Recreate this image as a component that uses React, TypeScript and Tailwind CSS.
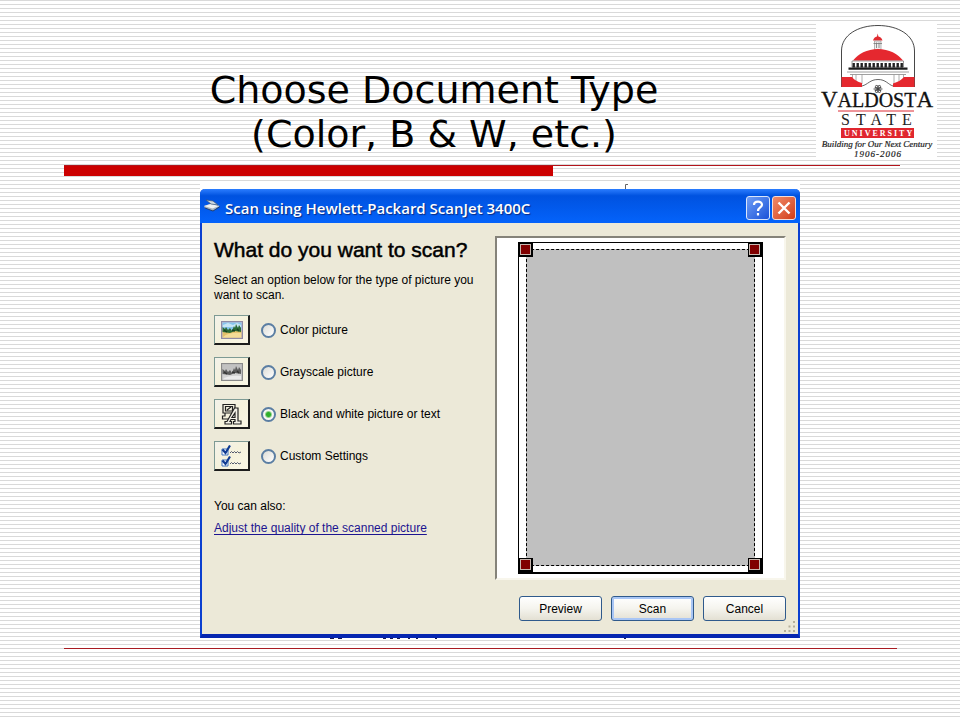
import React, { useState } from 'react';

interface ScanOption {
  id: string;
  label: string;
  icon: React.ReactNode;
}

const ColorIcon = () => (
  <svg className="w-[22px] h-[18px]" viewBox="0 0 22 18">
    <rect x="0.5" y="0.5" width="21" height="17" fill="#b9b4c8" stroke="#8f8ba5" />
    <rect x="1.5" y="1.5" width="19" height="8" fill="#86c5ee" />
    <path d="M2 4 L7 2 L12 4 L16 2 L20 4 V6 H2 Z" fill="#c7e6f5" />
    <rect x="1.5" y="9.5" width="19" height="7" fill="#e3c069" />
    <path d="M2 16 Q8 11 20 12 V16.5 H2 Z" fill="#f4dc96" />
    <path d="M1.5 6 L4 8 L5 6 L7 9 L9 7 L11 10 L13 5 L14 7 L15 3 L17 7 L18 4 L20 7 V11 L14 10 L9 12 L1.5 11 Z" fill="#2c6b35" />
    <path d="M3 9 L6 11 M11 9 L14 10 M16 8 L18 10" stroke="#163f22" strokeWidth="1.4" />
  </svg>
);

const GrayscaleIcon = () => (
  <svg className="w-[22px] h-[18px]" viewBox="0 0 22 18">
    <rect x="0.5" y="0.5" width="21" height="17" fill="#b5b5b5" stroke="#8a8a8a" />
    <rect x="1.5" y="1.5" width="19" height="8" fill="#c2c2c2" />
    <rect x="1.5" y="9.5" width="19" height="7" fill="#d2d2d2" />
    <path d="M2 16 Q8 12 20 13 V16.5 H2 Z" fill="#ececec" />
    <path d="M1.5 6 L4 8 L5 6 L7 9 L9 7 L11 10 L13 5 L14 7 L15 3 L17 7 L18 4 L20 7 V11 L14 10 L9 12 L1.5 11 Z" fill="#5c5c5c" />
    <path d="M3 9 L6 11 M11 9 L14 10 M16 8 L18 10" stroke="#333" strokeWidth="1.4" />
  </svg>
);

const BlackWhiteIcon = () => (
  <svg className="w-[22px] h-[22px]" viewBox="0 0 22 22" fill="none" stroke="#222" strokeWidth="1.2">
    <path d="M2 1.5 H14 V10 H2 Z" />
    <path d="M4.5 3.5 H11.5 V8 H4.5 Z M6 7 L10 4" />
    <path d="M4 10 V13 H1.5 V16 H8" />
    <path d="M13.5 5 H17 V18 H20 V21 H12.5 V18.5 H14 V16.5 H10 L9 18.5 H10.5 V21 H4 V18.5 H6 Z" fill="#f4f2e8" />
    <path d="M11 14.5 H14 V10 Z" />
  </svg>
);

const CustomIcon = () => (
  <svg className="w-[22px] h-[22px]" viewBox="0 0 22 22" fill="none">
    {[0, 11].map(y => (
      <g key={y} transform={`translate(0 ${y})`}>
        <path d="M1 4 H7 V10 H1 Z" fill="#fff" stroke="#3f74c0" />
        <path d="M1.5 4.5 L4.5 8 L9 0.5" stroke="#103c92" strokeWidth="2.2" />
        <path d="M9 8 L10.5 6.5 L12 8 L13.5 6.5 L15 8 L16.5 6.5 L18 8 L20 7" stroke="#555b70" />
      </g>
    ))}
  </svg>
);

const options: ScanOption[] = [
  { id: 'color', label: 'Color picture', icon: <ColorIcon /> },
  { id: 'grayscale', label: 'Grayscale picture', icon: <GrayscaleIcon /> },
  { id: 'bw', label: 'Black and white picture or text', icon: <BlackWhiteIcon /> },
  { id: 'custom', label: 'Custom Settings', icon: <CustomIcon /> },
];

const columns = [36, 40, 44, 48, 52, 56, 60, 64, 68, 72, 76, 80, 84];

const UniversityLogo = () => (
  <svg
    className="w-[121px] h-[136px] shrink-0 bg-white font-['Liberation_Serif',serif]"
    viewBox="0 0 121 136"
    role="img"
    aria-label="Valdosta State University"
  >
    <path d="M25.5 64 V28 C25.5 12 42 2.5 62 2.5 S98.5 12 98.5 28 V64" fill="none" stroke="#333" strokeWidth="0.9" />
    {/* Tower */}
    <path d="M57 17.5 Q58 14 61 13.5 L61.7 10.5 L62.4 13.5 Q65.5 14 66.5 17.5 Z" fill="#e02a30" />
    <path d="M58.5 18 H65 V27 H58.5 Z" fill="#eee" stroke="#888" strokeWidth="0.6" />
    <path d="M60.5 19.5 V25 M63 19.5 V25 M57.5 20.5 H66" stroke="#777" strokeWidth="0.8" />
    {/* Dome */}
    <path d="M37 37.5 C42 31 51 26 62 26 S82 31 87 37.5 Z" fill="#e5282f" />
    <path d="M36 38 H87.5 V44 H36 Z" fill="#fff" stroke="#555" strokeWidth="0.6" />
    {columns.map(x => (
      <rect key={x} x={x + 0.5} y="40" width="2.4" height="4.5" fill="#222" />
    ))}
    <path d="M32.5 44.5 H91.5 V46.8 H32.5 Z" fill="#1b1b1b" />
    <path d="M31 49 H93 M34 51.5 H90" stroke="#888" strokeWidth="0.8" />
    <path d="M36.5 51 V57 M40 51 V59 M46 51 V61 M78 51 V61 M83 51 V59 M87.5 51 V57" stroke="#999" strokeWidth="0.8" />
    <path d="M25.5 54 H36 Q39 58 46 60 V64 H25.5 Z" fill="#e5282f" />
    <path d="M98.5 54 H88 Q84 58.5 77 60.5 V64 H98.5 Z" fill="#e5282f" />
    <path d="M46 63 C52 61.5 54 56.5 62 56.5 S72 61.5 77 63" fill="none" stroke="#555" strokeWidth="0.9" />
    <g fill="none" stroke="#444" strokeWidth="0.7">
      <circle cx="62" cy="66" r="1.2" fill="#444" />
      <ellipse cx="62" cy="66" rx="4.2" ry="1.8" />
      <ellipse cx="62" cy="66" rx="4.2" ry="1.8" transform="rotate(60 62 66)" />
      <ellipse cx="62" cy="66" rx="4.2" ry="1.8" transform="rotate(120 62 66)" />
    </g>
    <text x="61" y="84" textAnchor="middle" fontSize="20" fill="#111" stroke="#111" strokeWidth="0.3">
      <tspan fontSize="23">V</tspan>ALDOST<tspan fontSize="23">A</tspan>
    </text>
    <path d="M22 88 H98" stroke="#dc2a35" />
    <text x="25" y="102" fontSize="16" fill="#222" className="tracking-[6px]">STATE</text>
    <rect x="25" y="105" width="73" height="10" fill="#e0262e" />
    <text x="28" y="113" fontSize="8" fill="#fff" fontWeight="bold" className="tracking-[2px]">UNIVERSITY</text>
    <text x="61" y="124" textAnchor="middle" fontSize="9" fontStyle="italic" fill="#222" stroke="#222" strokeWidth="0.2">Building for Our Next Century</text>
    <text x="38" y="134" fontSize="9" fontStyle="italic" fill="#222" stroke="#222" strokeWidth="0.2" className="tracking-[1px]">1906-2006</text>
  </svg>
);

const ScannerIcon = () => (
  <svg className="w-[18px] h-[14px]" viewBox="0 0 18 14">
    <path d="M1 7 L8 4.5 L17 7 L10 12 L2 9 Z" fill="#a8b4bf" />
    <path d="M1 7 L8 5 L16 7 L9.5 9.5 Z" fill="#eef2f4" />
    <path d="M3 1 L10 2 L15 6 L8 5 Z" fill="#cfd8de" stroke="#3c5878" strokeWidth="0.7" />
    <path d="M2 9 L10 12 L17 7.5" fill="none" stroke="#223f70" />
  </svg>
);

const Handle = ({ className }: { className: string }) => (
  <span className={`absolute size-[14px] border border-r-2 border-b-2 border-black bg-[#800000] inset-ring inset-ring-[#c8b8b0] ${className}`} />
);

const xpButton =
  'h-[25px] w-[83px] rounded-[3px] border border-[#2f5a8c] bg-linear-to-b from-white via-[#f5f4ee] to-[#e3e0d3] text-xs text-black';

export default function App() {
  const [selected, setSelected] = useState('bw');

  return (
    <main className="min-h-screen bg-white bg-[repeating-linear-gradient(to_bottom,#d9d9d9_0px,#d9d9d9_1px,transparent_1px,transparent_4px)] font-['Liberation_Sans',sans-serif] text-black">
      <header className="flex items-start pt-[23px] pr-[23px]">
        <h1 className="flex-1 pt-[45px] pr-3 pl-16 text-center font-['DejaVu_Sans',sans-serif] text-[38px] leading-[44px]">
          Choose Document Type
          <br />
          (Color, B &amp; W, etc.)
        </h1>
        <UniversityLogo />
      </header>

      <div className="mt-[6px] mr-[60px] ml-16 border-t border-[#b3141b]">
        <div className="h-[10px] w-[58.5%] bg-[#cc0000]" />
      </div>

      <div className="mt-2 mr-40 ml-[200px] bg-white">
        {/* Sliver of the page behind the dialog */}
        <svg className="ml-[425px] h-[5px] w-1" viewBox="0 0 4 5">
          <path d="M0.5 5 V0.5 H3" fill="none" stroke="#666" />
        </svg>

        <section className="rounded-t-[5px] border-x-2 border-b-4 border-[#0b3fd0] border-b-[#0626b0] bg-[#ece9d8]" aria-labelledby="dialog-title">
          <div className="-mx-[2px] flex h-[34px] items-center rounded-t-[5px] bg-linear-to-b from-[#2a7dff] via-[#0052e0] via-20% to-[#0463fb] pr-1 pl-[3px]">
            <ScannerIcon />
            <h2 id="dialog-title" className="ml-1 flex-1 pt-1 font-['Open_Sans',sans-serif] text-[15px] font-semibold text-white [text-shadow:1px_1px_1px_#0a2a80]">
              Scan using Hewlett-Packard ScanJet 3400C
            </h2>
            <div className="flex gap-[2px] pt-1">
              <button type="button" aria-label="Help" className="flex size-[24px] items-center justify-center rounded-[3px] border border-[#dbe6fb] bg-linear-to-br from-[#6f9df5] to-[#1a50d8]">
                <svg className="size-[18px]" viewBox="0 0 18 18" fill="none" stroke="#fff" strokeWidth="2.2">
                  <path d="M5 6 C5 1.5 13 1.5 13 5.8 C13 8.5 9 8.5 9 12" />
                  <path d="M9 14 V16.5" />
                </svg>
              </button>
              <button type="button" aria-label="Close" className="flex size-[24px] items-center justify-center rounded-[3px] border border-[#f3dcd8] bg-linear-to-br from-[#f08a68] to-[#d23a12]">
                <svg className="size-[18px]" viewBox="0 0 18 18" fill="none" stroke="#fff" strokeWidth="2.4">
                  <path d="M3.5 3.5 L14.5 14.5 M14.5 3.5 L3.5 14.5" />
                </svg>
              </button>
            </div>
          </div>

          <div className="flex pt-[13px] pr-3 pl-3">
            <div className="flex-1">
              <h3 className="text-[21px] leading-[27px] [-webkit-text-stroke:0.5px_black]">What do you want to scan?</h3>
              <p className="mt-[10px] text-xs leading-[15px]">
                Select an option below for the type of picture you
                <br />
                want to scan.
              </p>

              <div className="mt-3 flex flex-col gap-3" role="radiogroup" aria-label="Picture type">
                {options.map(option => (
                  <div key={option.id} className="flex items-center">
                    <button
                      type="button"
                      aria-label={option.label}
                      onClick={() => setSelected(option.id)}
                      className="flex h-[30px] w-9 items-center justify-center border border-r-2 border-b-2 border-[#7d9a94] border-r-[#1d1d1d] border-b-[#1d1d1d] bg-linear-to-br from-[#f3f2ea] via-[#f5f2dc] to-[#faf7e6]"
                    >
                      {option.icon}
                    </button>
                    <input
                      type="radio"
                      id={option.id}
                      name="picture-type"
                      checked={selected === option.id}
                      onChange={() => setSelected(option.id)}
                      className="ml-[11px] size-[15px] appearance-none rounded-full border-2 border-[#5b7ea3] bg-linear-to-br from-[#dcdcd6] to-white checked:bg-[radial-gradient(circle,#2fae2c_0px,#2fae2c_2px,#f7f7f4_4px)]"
                    />
                    <label htmlFor={option.id} className="pl-1 text-xs">
                      {option.label}
                    </label>
                  </div>
                ))}
              </div>

              <p className="mt-[26px] text-xs leading-[18px]">You can also:</p>
              <a href="#quality" className="mt-1 inline-block text-xs leading-[18px] text-[#1c1490] underline underline-offset-2">
                Adjust the quality of the scanned picture
              </a>
            </div>

            <div className="w-[291px]">
              <div className="border-2 border-t-[#85837a] border-r-[#f8f6ec] border-b-[#f8f6ec] border-l-[#85837a] bg-white px-[21px] py-1">
                <div className="relative border border-b-2 border-black px-[7px] py-[6px]">
                  <div className="h-[317px] border border-dashed border-black bg-[#c0c0c0]" />
                  <Handle className="top-0 left-0" />
                  <Handle className="top-0 right-0" />
                  <Handle className="bottom-0 left-0" />
                  <Handle className="right-0 bottom-0" />
                </div>
              </div>
              <div className="mt-4 flex justify-end gap-[9px]">
                <button type="button" className={xpButton}>Preview</button>
                <button type="button" className={`${xpButton} inset-ring-2 inset-ring-[#a9c6f5]`}>Scan</button>
                <button type="button" className={xpButton}>Cancel</button>
              </div>
            </div>
          </div>

          {/* Resize grip */}
          <div className="flex h-[13px] justify-end pr-[2px]">
            <svg className="size-[12px]" viewBox="0 0 12 12" fill="#b5b09a">
              <path d="M9 0 h2 v2 h-2 Z M4.5 4.5 h2 v2 h-2 Z M9 4.5 h2 v2 h-2 Z M0 9 h2 v2 h-2 Z M4.5 9 h2 v2 h-2 Z M9 9 h2 v2 h-2 Z" />
            </svg>
          </div>
        </section>

        <svg className="h-[2px] w-full" viewBox="0 0 600 2" preserveAspectRatio="xMinYMin" fill="#1a1a50">
          <path d="M130 0 h4 v1 h-4 Z M138 0 h4 v1 h-4 Z M183 0 h3 v1 h-3 Z M190 0 h3 v1 h-3 Z M197 0 h3 v1 h-3 Z M208 0 h2 v1 h-2 Z M216 0 h2 v1 h-2 Z M235 0 h2 v1 h-2 Z M424 0 h2 v1 h-2 Z" />
        </svg>
      </div>

      <hr className="mt-2 mr-[63px] ml-16 border-t border-[#a81c22]" />
    </main>
  );
}
